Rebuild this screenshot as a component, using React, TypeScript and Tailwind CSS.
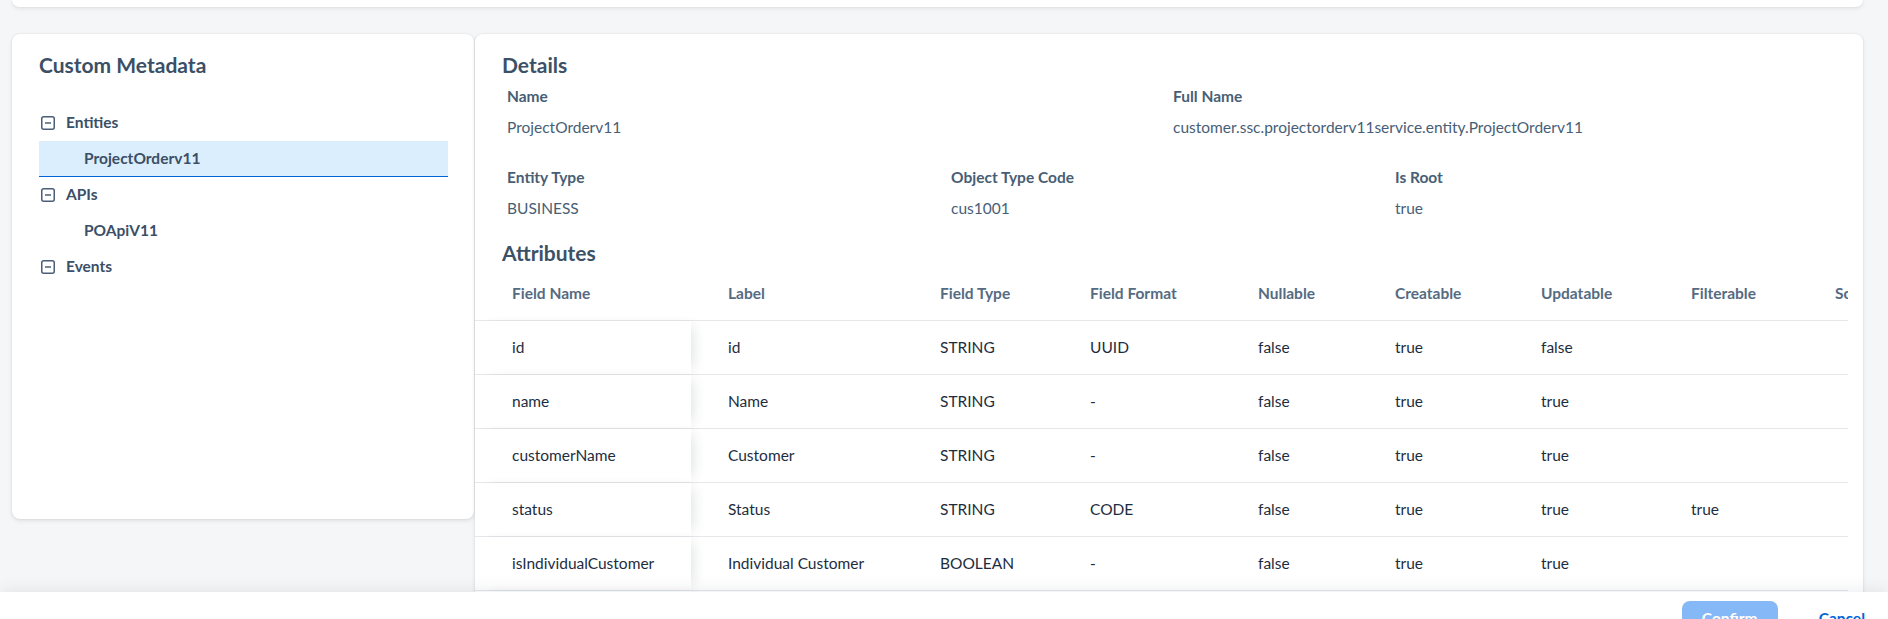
import React from 'react';

type Row = string[];

const columns = [
  { title: 'Field Name', width: 216 },
  { title: 'Label', width: 212 },
  { title: 'Field Type', width: 150 },
  { title: 'Field Format', width: 168 },
  { title: 'Nullable', width: 137 },
  { title: 'Creatable', width: 146 },
  { title: 'Updatable', width: 150 },
  { title: 'Filterable', width: 144 },
  { title: 'Sortable', width: 150 },
];

const rows: Row[] = [
  ['id', 'id', 'STRING', 'UUID', 'false', 'true', 'false', '', ''],
  ['name', 'Name', 'STRING', '-', 'false', 'true', 'true', '', ''],
  ['customerName', 'Customer', 'STRING', '-', 'false', 'true', 'true', '', ''],
  ['status', 'Status', 'STRING', 'CODE', 'false', 'true', 'true', 'true', ''],
  ['isIndividualCustomer', 'Individual Customer', 'BOOLEAN', '-', 'false', 'true', 'true', '', ''],
  ['displayId', 'Display ID', 'STRING', '-', 'true', 'true', 'true', 'true', ''],
];

function CollapseIcon() {
  return (
    <svg width="14" height="14" viewBox="0 0 14 14" fill="none" className="shrink-0">
      <rect x="0.75" y="0.75" width="12.5" height="12.5" rx="2" stroke="#4a5f76" strokeWidth="1.5" />
      <line x1="4" y1="7" x2="10" y2="7" stroke="#4a5f76" strokeWidth="1.5" />
    </svg>
  );
}

function TreeGroup({ label }: { label: string }) {
  return (
    <div className="h-[36px] flex items-center pl-[2px] gap-[11px]">
      <CollapseIcon />
      <span className="text-[15.5px] font-bold text-[#3b4f66]">{label}</span>
    </div>
  );
}

function TreeLeaf({ label, selected }: { label: string; selected?: boolean }) {
  return (
    <div
      className={`h-[36px] flex items-center pl-[45px] ${
        selected ? 'bg-[#dbeefd] border-b border-[#0064d9]' : ''
      }`}
    >
      <span className="text-[15.5px] font-bold text-[#3b4f66]">{label}</span>
    </div>
  );
}

function Field({ label, value }: { label: string; value: string }) {
  return (
    <div>
      <div className="text-[15.5px] leading-[20px] font-bold text-[#475e75]">{label}</div>
      <div className="mt-[11px] text-[15.5px] leading-[20px] text-[#475e75]">{value}</div>
    </div>
  );
}

export default function App() {
  return (
    <div className="h-[619px] w-full overflow-hidden bg-[#f5f6f7] flex flex-col font-['Lato',sans-serif]">
      <div className="h-[592px] shrink-0 pl-[12px] pr-[25px] flex flex-col">
        <div className="h-[7px] bg-white rounded-b-lg shadow-[0_0_2px_rgba(34,53,72,0.1),0_2px_4px_rgba(34,53,72,0.08)]" />

        <div className="mt-[27px] flex-1 min-h-0 flex items-start gap-px">
          {/* tree */}
          <aside className="w-[462px] h-[485px] shrink-0 bg-white rounded-lg shadow-[0_0_2px_rgba(34,53,72,0.12),0_2px_4px_rgba(34,53,72,0.1)] pt-[19px] pl-[27px] pr-[26px]">
            <h2 className="text-[21px] leading-[24px] font-bold text-[#3b4f66]">Custom Metadata</h2>
            <div className="mt-[28px]">
              <TreeGroup label="Entities" />
              <TreeLeaf label="ProjectOrderv11" selected />
              <TreeGroup label="APIs" />
              <TreeLeaf label="POApiV11" />
              <TreeGroup label="Events" />
            </div>
          </aside>

          {/* details */}
          <section className="flex-1 min-w-0 h-full bg-white rounded-t-lg shadow-[0_0_2px_rgba(34,53,72,0.12),0_2px_4px_rgba(34,53,72,0.1)] overflow-hidden">
            <div className="pt-[19px] pl-[27px]">
              <h2 className="text-[21px] leading-[24px] font-bold text-[#3d5166]">Details</h2>
              <div className="ml-[5px] w-[1332px]">
                <div className="mt-[9px] grid grid-cols-2">
                  <Field label="Name" value="ProjectOrderv11" />
                  <Field label="Full Name" value="customer.ssc.projectorderv11service.entity.ProjectOrderv11" />
                </div>
                <div className="mt-[30px] grid grid-cols-3">
                  <Field label="Entity Type" value="BUSINESS" />
                  <Field label="Object Type Code" value="cus1001" />
                  <Field label="Is Root" value="true" />
                </div>
              </div>
              <h2 className="mt-[23px] text-[21px] leading-[24px] font-bold text-[#3d5166]">Attributes</h2>
            </div>

            <div className="mt-[2px] mr-[15px] overflow-hidden">
              <div className="flex h-[54px] border-b border-[#e5e7ea]">
                {columns.map((c) => (
                  <div
                    key={c.title}
                    style={{ width: c.width }}
                    className="shrink-0 pl-[37px] flex items-center text-[15.5px] font-bold text-[#556b82] whitespace-nowrap"
                  >
                    {c.title}
                  </div>
                ))}
              </div>
              {rows.map((r) => (
                <div key={r[0]} className="flex h-[54px] border-b border-[#e5e7ea]">
                  {r.map((cell, i) => (
                    <div
                      key={i}
                      style={{ width: columns[i].width }}
                      className={`shrink-0 pl-[37px] flex items-center text-[15.5px] text-[#1d2d3e] whitespace-nowrap ${
                        i === 0 ? 'relative z-10 bg-white shadow-[8px_0_12px_-6px_rgba(34,53,72,0.14)]' : ''
                      }`}
                    >
                      {cell}
                    </div>
                  ))}
                </div>
              ))}
            </div>
          </section>
        </div>
      </div>

      <footer className="relative z-20 h-[60px] shrink-0 bg-white shadow-[0_-3px_14px_rgba(34,53,72,0.08)] flex justify-end items-start pt-[9px] pr-[11px]">
        <button className="w-[96px] h-[36px] rounded-lg bg-[#85b8f6] text-white text-[15.5px] font-bold">
          Confirm
        </button>
        <button className="ml-[29px] h-[36px] px-[12px] text-[#0064d9] text-[15.5px] font-bold">
          Cancel
        </button>
      </footer>
    </div>
  );
}
